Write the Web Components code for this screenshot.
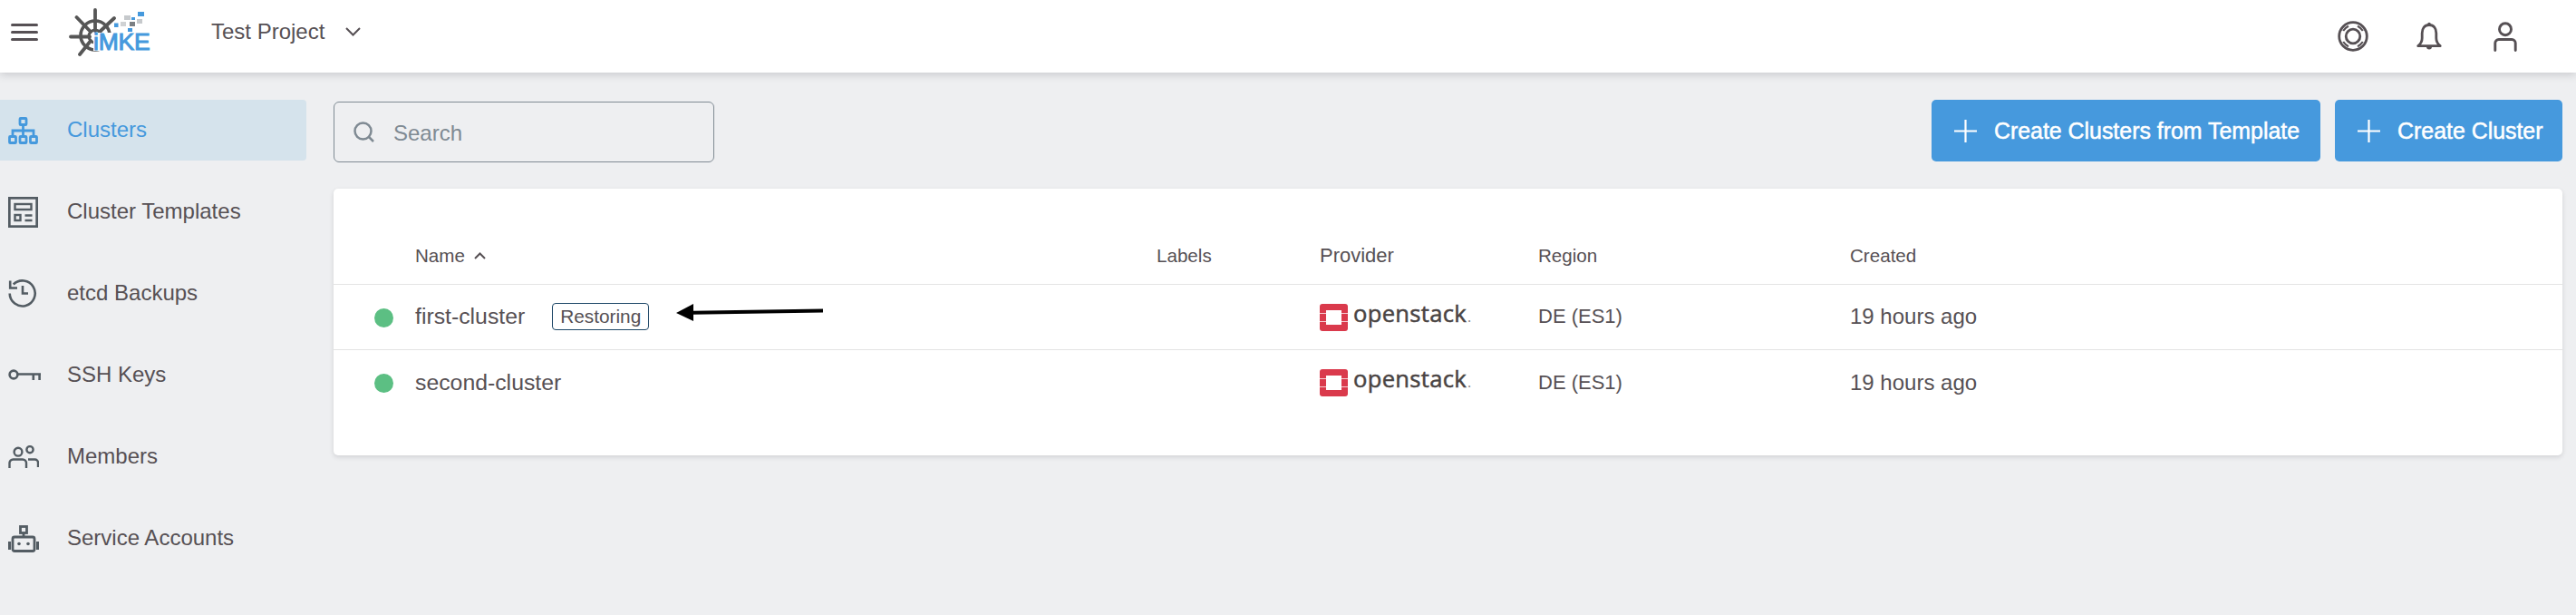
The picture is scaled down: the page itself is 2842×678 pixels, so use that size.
<!DOCTYPE html>
<html><head><meta charset="utf-8"><title>Clusters</title>
<style>
html,body{margin:0;padding:0;background:#eeeff1;font-family:"Liberation Sans",Arial,sans-serif;color:#565054}
</style></head><body>
<app-shell>
  <app-header slot="header"></app-header>
  <app-sidebar slot="sidebar">
    <nav-item icon="clusters" active>Clusters</nav-item>
    <nav-item icon="templates">Cluster Templates</nav-item>
    <nav-item icon="history">etcd Backups</nav-item>
    <nav-item icon="key">SSH Keys</nav-item>
    <nav-item icon="members">Members</nav-item>
    <nav-item icon="robot">Service Accounts</nav-item>
  </app-sidebar>
  <page-toolbar>
    <search-box slot="start" placeholder="Search"></search-box>
    <action-button>Create Clusters from Template</action-button>
    <action-button class="last">Create Cluster</action-button>
  </page-toolbar>
  <cluster-table>
    <cluster-row name="first-cluster" tag="Restoring" region="DE (ES1)" created="19 hours ago"></cluster-row>
    <cluster-row name="second-cluster" region="DE (ES1)" created="19 hours ago"></cluster-row>
  </cluster-table>
</app-shell>
<script>
const ICONS={
clusters:`<svg width="33" height="30" viewBox="0 0 33 30" fill="none" stroke="currentColor" stroke-width="2.800"><rect x="13" y="1.500" width="7" height="7" rx=".8"/><path d="M16.500 8.500V22M5 22v-7h23v7"/><rect x="1.500" y="21.500" width="7" height="7" rx=".8"/><rect x="13" y="21.500" width="7" height="7" rx=".8"/><rect x="24.500" y="21.500" width="7" height="7" rx=".8"/></svg>`,
templates:`<svg width="33" height="34" viewBox="0 0 33 34" fill="none" stroke="currentColor" stroke-width="2.400"><rect x="1.200" y="1.200" width="30.600" height="31.600" stroke-width="3"/><rect x="7.500" y="8" width="18" height="6"/><rect x="7.500" y="20" width="6" height="6"/><path d="M18.500 20.500h8M18.500 26h8"/></svg>`,
history:`<svg width="32" height="33" viewBox="0 0 32 33" fill="none" stroke="currentColor" stroke-width="2.600"><path d="M1.700 16.500A14 14 0 1 0 5.800 6.500"/><path d="M2.200 2.500v8H10"/><path d="M16 8v8.500h6"/></svg>`,
key:`<svg width="36" height="14" viewBox="0 0 36 14" fill="none" stroke="currentColor" stroke-width="2.600"><circle cx="6" cy="6" r="4.400"/><path d="M10.500 5.500H36M27.800 5.500V12M34.600 5.500V12"/></svg>`,
members:`<svg width="34" height="26" viewBox="0 0 34 26" fill="none" stroke="currentColor" stroke-width="2.400"><circle cx="11" cy="7.200" r="4.400"/><circle cx="24" cy="4.700" r="3.600"/><path d="M1.500 25v-5.500a4 4 0 0 1 4-4H16a4 4 0 0 1 4 4V25"/><path d="M22 15.500h7.500a3.500 3.500 0 0 1 3.500 3.500v5"/></svg>`,
robot:`<svg width="34" height="30" viewBox="0 0 34 30" fill="none" stroke="currentColor" stroke-width="2.800"><rect x="13.500" y="1.500" width="7" height="7"/><path d="M17 8.500V13"/><rect x="5" y="13" width="24" height="15.500" rx="2"/><path d="M1.500 18v9M32.500 18v9" stroke-width="3"/><circle cx="12" cy="20.500" r="1.800" fill="currentColor" stroke="none"/><circle cx="22" cy="20.500" r="1.800" fill="currentColor" stroke="none"/></svg>`,
buoy:`<svg width="34" height="34" viewBox="0 0 34 34" fill="none" stroke="currentColor" stroke-width="2.800"><circle cx="17" cy="17" r="15.300"/><circle cx="17" cy="17" r="7.800"/><path d="M6.200 11C8 8.300 9.500 7 12 5.800M27.800 11C26 8.300 24.500 7 22 5.800M6.200 23C8 25.700 9.500 27 12 28.200M27.800 23C26 25.700 24.500 27 22 28.200" stroke-width="2.200"/></svg>`,
bell:`<svg width="28" height="32" viewBox="0 0 28 32" fill="none" stroke="currentColor" stroke-width="2.800" stroke-linejoin="round"><path d="M14 3.500C8.800 3.500 6.200 7.500 6.200 12.500V18C6.200 21.500 4.500 24.500 1.800 26.700H26.200C23.500 24.500 21.800 21.500 21.800 18V12.500C21.800 7.500 19.200 3.500 14 3.500Z"/><circle cx="14" cy="2.500" r="1.800" fill="currentColor" stroke="none"/><path d="M11 27.500h6a3 3 0 0 1-6 0z" fill="currentColor" stroke="none"/></svg>`,
person:`<svg width="26" height="33" viewBox="0 0 26 33" fill="none" stroke="currentColor" stroke-width="2.900" stroke-linecap="round"><circle cx="13" cy="8.200" r="6.500"/><path d="M1.800 31.500V23.500a4 4 0 0 1 4-4H20.200a4 4 0 0 1 4 4v8"/></svg>`
};
function define(tag,css,html){
  customElements.define(tag,class extends HTMLElement{
    constructor(){super();this.attachShadow({mode:'open'});}
    connectedCallback(){
      const h=typeof html==='function'?html(this):html;
      this.shadowRoot.innerHTML=`<style>${css}</style>${h}`;
    }
  });
}
define('app-shell',`
 :host{display:grid;grid-template-columns:338px minmax(0,1fr);grid-template-rows:80px 1fr;width:2842px;height:678px;overflow:hidden;background:#eeeff1;font-family:"Liberation Sans",Arial,sans-serif;color:#565054}
 ::slotted([slot=header]){grid-column:1/3}
 .main{padding:0 15px 0 30px;min-width:0}
`,`<slot name="header"></slot><slot name="sidebar"></slot><div class="main"><slot></slot></div>`);

define('app-header',`
 :host{display:flex;justify-content:space-between;align-items:center;height:80px;background:#fff;box-shadow:0 2px 9px rgba(60,60,70,.22);position:relative;z-index:2;padding:0 36px 0 12px;box-sizing:border-box}
 .left{display:flex;align-items:center;height:70px;margin-bottom:10px}
 .ham{display:flex;flex-direction:column;gap:5px;width:30px}
 .ham i{display:block;height:3px;border-radius:1.500px;background:#565054}
 app-logo{margin-left:34px}
 .proj{margin-left:67px;font-size:24px}
 .chev{margin-left:23px;display:block}
 .right{display:flex;color:#565054}
 .right span{width:84px;display:flex;justify-content:center;align-items:center;height:34px}
`,`<div class="left"><div class="ham"><i></i><i></i><i></i></div><app-logo></app-logo><div class="proj">Test Project</div>
<svg class="chev" width="17" height="10" viewBox="0 0 17 10" fill="none" stroke="#565054" stroke-width="2"><path d="M1 1l7.500 7.500L16 1"/></svg></div>
<div class="right"><span>${ICONS.buoy}</span><span>${ICONS.bell}</span><span>${ICONS.person}</span></div>`);

define('app-logo',`
 :host{display:block;width:90px;height:53px;position:relative}
 svg{position:absolute;left:0;top:0}
 b{position:absolute;left:27px;top:27.500px;font:400 26.500px/20px "Liberation Sans",Arial,sans-serif;color:#4599dd;-webkit-text-stroke:1px #4599dd;letter-spacing:-.2px;background:#fff}
`,`<svg width="90" height="53" viewBox="76 11 90 53" fill="none">
<g stroke="#565656" stroke-linecap="round">
<circle cx="105" cy="41" r="16" stroke-width="3.600"/>
<circle cx="105" cy="42" r="7" stroke-width="3.200"/>
<path stroke-width="3.800" d="M105 13V36M78 42.500H99M84.500 21L100 37M126 22L110 37M88 62L100 47"/>
</g>
<rect x="152" y="15" width="7" height="5" fill="#4599dd"/><rect x="137" y="19" width="7" height="5" fill="#c6c9cc"/><rect x="145" y="21" width="4" height="3" fill="#4599dd"/><rect x="151" y="23" width="6" height="5" fill="#c6c9cc"/><rect x="133" y="26" width="6" height="5" fill="#d0d2d4"/><rect x="143" y="26" width="6" height="5" fill="#7b7f83"/><rect x="126" y="27.500" width="4.500" height="4.500" fill="#4599dd"/><rect x="141" y="33" width="5" height="4" fill="#4599dd"/>
</svg><b>iMKE</b>`);

define('app-sidebar',`:host{display:flex;flex-direction:column;gap:23px;padding-top:30px;box-sizing:border-box;width:338px}`,`<slot></slot>`);

define('nav-item',`
 :host{display:flex;align-items:center;height:67px;border-radius:0 4px 4px 0;color:#565054;font-size:24px}
 :host([active]){background:#d5e3ec;color:#4599dd}
 .ic{width:52px;margin-left:9px;margin-right:13px;display:flex;align-items:center;color:#535c63;flex:none}
 :host([active]) .ic{color:#4599dd}
 .t{margin-top:-1px}
`,el=>`<span class="ic">${ICONS[el.getAttribute('icon')]}</span><span class="t"><slot></slot></span>`);

define('page-toolbar',`
 :host{display:flex;align-items:flex-start;height:128px;padding-top:30px;gap:16px;box-sizing:border-box}
 .sp{flex:1}
 ::slotted(search-box){margin-top:2px}
`,`<slot name="start"></slot><span class="sp"></span><slot></slot>`);

define('search-box',`
 :host{display:flex;align-items:center;width:420px;height:67px;box-sizing:border-box;border:1px solid #7f8a93;border-radius:6px;padding-left:21px;color:#7f8a93;font-size:24px}
 svg{display:block;margin-right:21px;flex:none}
 span{margin-top:3px}
`,el=>`<svg width="23" height="23" viewBox="0 0 23 23" fill="none" stroke="#7f8a93" stroke-width="2.500"><circle cx="10.500" cy="10.500" r="9"/><path d="M17 17l5 5"/></svg><span>${el.getAttribute('placeholder')}</span>`);

define('action-button',`
 :host{display:inline-flex;align-items:center;height:68px;box-sizing:border-box;background:#4699dd;border-radius:5px;color:#fff;font-size:24.900px;padding:0 23px 0 25px;-webkit-text-stroke:.5px #fff}
 :host(.last){padding-right:21.500px}
 svg{display:block;margin-right:19px;flex:none}
`,`<svg width="25" height="25" viewBox="0 0 25 25" stroke="#fff" stroke-width="2.200"><path d="M12.500 0v25M0 12.500h25"/></svg><span><slot></slot></span>`);

define('cluster-table',`
 :host{display:block;height:294px;background:#fff;border-radius:5px;box-shadow:0 2px 5px rgba(60,60,70,.16);position:relative}
 .head{display:grid;grid-template-columns:90px 818px 180px 241px 344px 1fr;height:106px;align-items:center;box-sizing:border-box;padding-top:42px;border-bottom:1px solid #e4e4e4;font-size:20.600px}
 .name{display:flex;align-items:center;gap:10px}
 .p{font-size:22px}
 .arrow{position:absolute;left:378px;top:125px}
`,`<div class="head"><span></span><span class="name">Name<svg width="13" height="8" viewBox="0 0 13 8" fill="none" stroke="#565054" stroke-width="2"><path d="M1 7l5.500-5.500L12 7"/></svg></span><span>Labels</span><span class="p">Provider</span><span>Region</span><span>Created</span></div>
<slot></slot>
<svg class="arrow" width="164" height="22" viewBox="0 0 164 22"><path d="M18 11.800L162 9.600" stroke="#000" stroke-width="4" fill="none"/><path d="M0 12L19 2V21Z" fill="#000"/></svg>`);

define('status-dot',`:host{display:block;width:21px;height:21px;border-radius:50%;background:#5cbf83}`,``);

define('status-tag',`
 :host{display:inline-flex;align-items:center;height:30px;box-sizing:border-box;border:1px solid #1f4868;border-radius:4px;padding:0 8px;font-size:20.800px;color:#565054}
`,`<slot></slot>`);

define('openstack-logo',`
 :host{display:flex;align-items:center;gap:6px;height:30px}
 svg{display:block;flex:none}
 b{font:400 25.600px/30px "Open Sans",sans-serif;color:#4a4443;margin-top:-5px;letter-spacing:.3px;-webkit-text-stroke:.5px #4a4443}
 i{font-style:normal;font-size:16px;color:#8a8584;margin-left:1px;-webkit-text-stroke:0}
`,`<svg width="31" height="30" viewBox="0 0 31 30"><rect width="31" height="30" rx="3" fill="#da3a4c"/><rect x="7" y="7" width="17" height="16" fill="#fff"/><path d="M0 10.500H7M24 10.500H31M0 19.500H7M24 19.500H31" stroke="#f6cdd2" stroke-width="1.200"/></svg><b>openstack<i>.</i></b>`);

define('cluster-row',`
 :host{display:grid;grid-template-columns:90px 818px 180px 241px 344px 1fr;height:72px;align-items:center;box-sizing:border-box;border-bottom:1px solid #e4e4e4}
 :host(:last-child){border-bottom:0}
 .dotc{padding-left:45px;margin-top:1px}
 .name{display:flex;align-items:center;gap:30px;font-size:24.800px;margin-top:-1px}
 .region{font-size:22px;margin-top:-1px}
 .created{font-size:24px;margin-top:-1px}
`,el=>{const t=el.getAttribute('tag');return `<div class="dotc"><status-dot></status-dot></div><div class="name"><span>${el.getAttribute('name')}</span>${t?`<status-tag>${t}</status-tag>`:''}</div><div></div><div><openstack-logo></openstack-logo></div><div class="region">${el.getAttribute('region')}</div><div class="created">${el.getAttribute('created')}</div>`});
</script>
</body></html>
